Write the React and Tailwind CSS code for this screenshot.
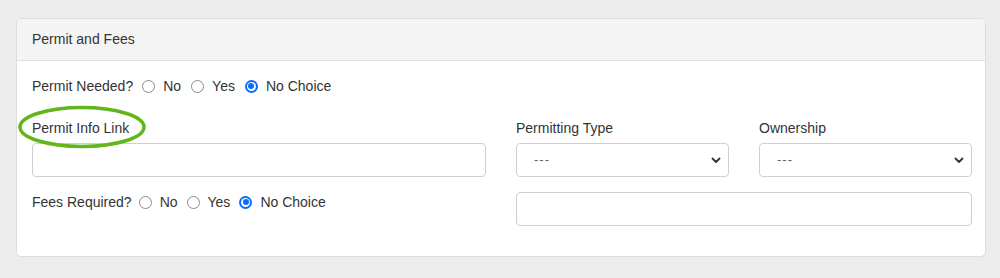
import React from 'react';

const font = { fontFamily: "'Liberation Sans', Arial, sans-serif" };

function Radio({ checked }) {
  if (checked) {
    return (
      <span className="w-[13px] h-[13px] rounded-full bg-[#0a6cff] flex items-center justify-center shrink-0">
        <span className="w-[9px] h-[9px] rounded-full bg-white flex items-center justify-center">
          <span className="w-[6px] h-[6px] rounded-full bg-[#0a6cff]"></span>
        </span>
      </span>
    );
  }
  return <span className="w-[13px] h-[13px] rounded-full border border-[#8a8a8a] bg-white shrink-0"></span>;
}

function RadioGroup({ label, gap, labelGap }) {
  const options = ['No', 'Yes', 'No Choice'];
  return (
    <div className="flex items-center h-5 text-[14px] text-[#333]">
      <span className={labelGap}>{label}</span>
      {options.map((o, i) => (
        <span key={o} className={`flex items-center ${i < 2 ? gap : ''}`}>
          <Radio checked={o === 'No Choice'} />
          <span className="ml-[8px]">{o}</span>
        </span>
      ))}
    </div>
  );
}

function Select() {
  return (
    <div className="h-[34px] rounded-[4px] border border-[#cfcfcf] bg-white flex items-center justify-between pl-[17px] pr-[6px]">
      <span className="text-[13px] text-[#666] tracking-[1px]">---</span>
      <svg width="12" height="12" viewBox="0 0 12 12">
        <path d="M2.5 4.5 L6 8 L9.5 4.5" fill="none" stroke="#333" strokeWidth="1.8" strokeLinecap="round" strokeLinejoin="round" />
      </svg>
    </div>
  );
}

export default function App() {
  return (
    <div className="w-[1000px] h-[278px] bg-[#ececec] pt-[18px] pl-[16px]" style={font}>
      <div className="w-[970px] bg-white border border-[#dddddd] rounded-[5px] overflow-hidden">
        <div className="h-[42px] bg-[#f4f4f4] border-b border-[#e0e0e0] flex items-center pl-[15px] text-[14px] text-[#333]">
          Permit and Fees
        </div>
        <div className="pl-[15px] pt-[15px] pb-[30px]">
          <RadioGroup label="Permit Needed?" gap="mr-[10px]" labelGap="mr-[9px]" />
          <div className="grid grid-cols-[454px_213px_213px] gap-x-[30px] mt-[22px]">
            <div>
              <div className="relative h-5 flex items-center text-[14px] text-[#333]">
                <span className="relative z-10">Permit Info Link</span>
                <svg className="absolute left-[-15px] top-[-14px] pointer-events-none" width="132" height="46" viewBox="0 0 132 46">
                  <ellipse cx="65" cy="23" rx="62" ry="19.5" fill="none" stroke="#62b51a" strokeWidth="3.5" />
                </svg>
              </div>
              <div className="mt-[5px] h-[34px] rounded-[4px] border border-[#cfcfcf] bg-white"></div>
            </div>
            <div>
              <div className="h-5 flex items-center text-[14px] text-[#333]">Permitting Type</div>
              <div className="mt-[5px]"><Select /></div>
            </div>
            <div>
              <div className="h-5 flex items-center text-[14px] text-[#333]">Ownership</div>
              <div className="mt-[5px]"><Select /></div>
            </div>
            <div className="mt-[15px]">
              <RadioGroup label="Fees Required?" gap="mr-[9px]" labelGap="mr-[7px]" />
            </div>
            <div className="col-span-2 mt-[15px] h-[34px] rounded-[4px] border border-[#cfcfcf] bg-white"></div>
          </div>
        </div>
      </div>
    </div>
  );
}
